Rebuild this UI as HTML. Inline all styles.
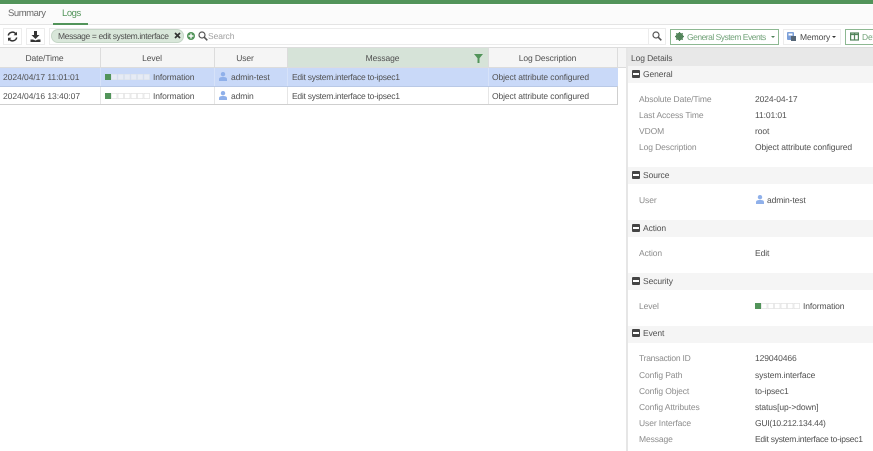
<!DOCTYPE html>
<html><head><meta charset="utf-8">
<style>
html,body{margin:0;padding:0;background:#fff}
#p{position:relative;width:873px;height:451px;overflow:hidden;background:#fff;font-family:"Liberation Sans",sans-serif;font-size:8.5px;letter-spacing:-.1px;color:#505050;text-rendering:geometricPrecision}
#p div,#p svg{position:absolute}
.t{white-space:nowrap;line-height:12px;height:12px}
.c{text-align:center}
.g{color:#8c8c8c}
.e{letter-spacing:-.26px}
.sec{left:628px;width:245px;height:17px;background:#f5f5f5}
.min{left:632px;width:8px;height:8px;background:#444;border-radius:1px}
.min:after{content:"";position:absolute;left:1px;top:3px;width:6px;height:2px;background:#fff}
.b{box-sizing:border-box;background:#fff;border:1px solid #ececec}
.v{width:1px;background:#dcdcdc}
.ro{width:1px;background:#e6e6e6}
</style></head><body><div id="p">
<div style="left:0;top:0;width:873px;height:4px;background:#52945a"></div>
<div style="left:0;top:5px;width:873px;height:19px;background:#fbfbfb"></div>
<div style="left:0;top:24px;width:873px;height:1px;background:#e4e4e4"></div>
<div style="left:53px;top:23px;width:35px;height:2px;background:#52945a"></div>
<div class="t" style="left:8px;top:8px;font-size:9.5px;letter-spacing:-.45px;color:#6a6a6a">Summary</div>
<div class="t" style="left:62px;top:8px;font-size:9.5px;letter-spacing:-.45px;color:#52945a">Logs</div>

<div class="b" style="left:3px;top:28px;width:19px;height:17px"></div>
<svg style="left:7px;top:31px" width="11" height="11" viewBox="0 0 11 11" fill="none" stroke="#333" stroke-width="1.500"><path d="M1.300 4.500A4.200 4.200 0 0 1 9 3.200M9.700 6.500A4.200 4.200 0 0 1 2 7.800"/><path d="M10 .8v3.400H6.600L10 .8zM1 10.200V6.800h3.400L1 10.200z" fill="#333" stroke="none"/></svg>
<div class="b" style="left:26px;top:28px;width:19px;height:17px"></div>
<svg style="left:30px;top:31px" width="11" height="11" viewBox="0 0 11 11"><path d="M4 0h3v4h2.500L5.500 8 1.500 4H4zM.5 8.500H3l2.500 1L8 8.500h2.500V11H.5z" fill="#333"/></svg>

<div class="b" style="left:49px;top:28px;width:600px;height:17px"></div>
<div style="left:51px;top:29px;width:133px;height:14px;background:#d9e7da;border:1px solid #c5d6c7;box-sizing:border-box;border-radius:7px"></div>
<div class="t" style="left:58px;top:30px;color:#4f4f4f;letter-spacing:-.37px">Message = edit system.interface</div>
<svg style="left:174px;top:32px" width="7" height="7" viewBox="0 0 7 7" stroke="#333" stroke-width="1.700"><path d="M1 1l5 5M6 1L1 6"/></svg>
<svg style="left:187px;top:32px" width="8" height="8" viewBox="0 0 8 8"><circle cx="4" cy="4" r="4" fill="#52945a"/><path d="M4 1.500v5M1.500 4h5" stroke="#fff" stroke-width="1.400"/></svg>
<svg style="left:198px;top:31px" width="10" height="10" viewBox="0 0 10 10" fill="none" stroke="#555" stroke-width="1.200"><circle cx="4" cy="4" r="3"/><path d="M6.200 6.200L9.300 9.300" stroke-width="1.600"/></svg>
<div class="t g" style="left:208px;top:30px;color:#a0a0a0">Search</div>
<div class="b" style="left:648px;top:28px;width:18px;height:17px"></div>
<svg style="left:652px;top:31px" width="10" height="10" viewBox="0 0 10 10" fill="none" stroke="#555" stroke-width="1.200"><circle cx="4" cy="4" r="3"/><path d="M6.200 6.200L9.300 9.300" stroke-width="1.600"/></svg>

<div class="b" style="left:670px;top:29px;width:109px;height:16px;border-color:#8db892"></div>
<svg style="left:675px;top:32px" width="9" height="9" viewBox="0 0 9 9"><circle cx="4.500" cy="4.500" r="2.800" fill="none" stroke="#52845a" stroke-width="2"/><path d="M4.500 0v9M0 4.500h9M1.300 1.300l6.400 6.400M7.700 1.300L1.300 7.700" stroke="#52845a" stroke-width="1.200"/></svg>
<div class="t" style="left:687px;top:31px;color:#73a37a;letter-spacing:-.5px">General System Events</div>
<div style="left:771px;top:36px;width:0;height:0;border:2px solid transparent;border-top:2px solid #52845a"></div>
<div class="b" style="left:783px;top:29px;width:58px;height:16px"></div>
<svg style="left:787px;top:32px" width="9" height="9" viewBox="0 0 9 9"><rect x="0" y="0" width="7" height="8" rx="1" fill="#7b9fd8"/><rect x="1.500" y="1.500" width="4" height="2" fill="#fff"/><rect x="4" y="4" width="5" height="5" fill="#567"/></svg>
<div class="t" style="left:800px;top:31px;color:#484848">Memory</div>
<div style="left:832px;top:36px;width:0;height:0;border:2px solid transparent;border-top:2px solid #333"></div>
<div class="b" style="left:844.500px;top:29px;width:40px;height:16px;border-color:#8db892"></div>
<svg style="left:850px;top:32px" width="9" height="9" viewBox="0 0 9 9" fill="none" stroke="#52845a" stroke-width="1.200"><rect x=".6" y="1" width="7.800" height="7"/><path d="M4.500 1v7M.6 2.500h7.800"/></svg>
<div class="t" style="left:862px;top:31px;color:#73a37a">Details</div>

<div style="left:0;top:47px;width:873px;height:1px;background:#dcdcdc"></div>
<div style="left:0;top:48px;width:618px;height:19px;background:#f5f5f5"></div>
<div style="left:288px;top:48px;width:200px;height:19px;background:#d6e3d8"></div>
<div style="left:0;top:67px;width:618px;height:1px;background:#dcdcdc"></div>
<div class="v" style="left:100px;top:48px;height:19px"></div>
<div class="v" style="left:214px;top:48px;height:19px"></div>
<div class="v" style="left:287px;top:48px;height:19px"></div>
<div class="v" style="left:488px;top:48px;height:19px"></div>
<div class="v" style="left:617px;top:48px;height:19px"></div>
<div class="t c" style="left:0;top:52px;width:89px">Date/Time</div>
<div class="t c" style="left:100px;top:52px;width:104px">Level</div>
<div class="t c" style="left:214px;top:52px;width:62px">User</div>
<div class="t c" style="left:288px;top:52px;width:189px">Message</div>
<div class="t c" style="left:489px;top:52px;width:117px">Log Description</div>
<svg style="left:474px;top:54px" width="9" height="9" viewBox="0 0 9 9"><path d="M0 0h9L5.500 4.200V9h-2V4.200z" fill="#52945a"/></svg>

<div style="left:618px;top:48px;width:8px;height:19px;background:#f5f5f5"></div>
<div style="left:618px;top:67px;width:8px;height:1px;background:#dcdcdc"></div>

<div style="left:0;top:68px;width:618px;height:18px;background:#c9d9f8"></div>
<div style="left:0;top:86px;width:618px;height:1px;background:#b9c9e6"></div>
<div style="left:0;top:87px;width:618px;height:17px;background:#fff"></div>
<div style="left:0;top:104px;width:618px;height:1px;background:#cfcfcf"></div>
<div style="left:617px;top:86px;width:1px;height:19px;background:#cfcfcf"></div>
<div class="ro" style="left:100px;top:68px;height:18px;background:#d6e2f9"></div>
<div class="ro" style="left:214px;top:68px;height:18px;background:#d6e2f9"></div>
<div class="ro" style="left:287px;top:68px;height:18px;background:#d6e2f9"></div>
<div class="ro" style="left:488px;top:68px;height:18px;background:#d6e2f9"></div>
<div class="ro" style="left:100px;top:87px;height:17px"></div>
<div class="ro" style="left:214px;top:87px;height:17px"></div>
<div class="ro" style="left:287px;top:87px;height:17px"></div>
<div class="ro" style="left:488px;top:87px;height:17px"></div>

<div class="t" style="left:3px;top:71px;letter-spacing:-.05px">2024/04/17 11:01:01</div>
<div class="t" style="left:3px;top:90px;letter-spacing:-.05px">2024/04/16 13:40:07</div>

<svg style="left:105px;top:74px" width="45" height="6" viewBox="0 0 45 6"><rect width="6" height="6" fill="#52945a"/><g fill="#e6ebf5" stroke="#dde2ea" stroke-width=".6"><rect x="6.500" y=".3" width="5.500" height="5.400"/><rect x="13" y=".3" width="5.500" height="5.400"/><rect x="19.500" y=".3" width="5.500" height="5.400"/><rect x="26" y=".3" width="5.500" height="5.400"/><rect x="32.500" y=".3" width="5.500" height="5.400"/><rect x="39" y=".3" width="5.500" height="5.400"/></g></svg>
<svg style="left:105px;top:93px" width="45" height="6" viewBox="0 0 45 6"><rect width="6" height="6" fill="#52945a"/><g fill="#fff" stroke="#dcdcdc" stroke-width=".6"><rect x="6.500" y=".3" width="5.500" height="5.400"/><rect x="13" y=".3" width="5.500" height="5.400"/><rect x="19.500" y=".3" width="5.500" height="5.400"/><rect x="26" y=".3" width="5.500" height="5.400"/><rect x="32.500" y=".3" width="5.500" height="5.400"/><rect x="39" y=".3" width="5.500" height="5.400"/></g></svg>
<div class="t" style="left:153px;top:71px">Information</div>
<div class="t" style="left:153px;top:90px">Information</div>

<svg style="left:219px;top:72px" width="8" height="9" viewBox="0 0 8 9" fill="#8fb0ea"><circle cx="4" cy="2.200" r="2.200"/><path d="M0 9V7.200C0 5.500 1.500 5 4 5s4 .5 4 2.200V9z"/></svg>
<svg style="left:219px;top:91px" width="8" height="9" viewBox="0 0 8 9" fill="#8fb0ea"><circle cx="4" cy="2.200" r="2.200"/><path d="M0 9V7.200C0 5.500 1.500 5 4 5s4 .5 4 2.200V9z"/></svg>
<div class="t" style="left:231px;top:71px">admin-test</div>
<div class="t" style="left:231px;top:90px">admin</div>
<div class="t e" style="left:292px;top:71px">Edit system.interface to-ipsec1</div>
<div class="t e" style="left:292px;top:90px">Edit system.interface to-ipsec1</div>
<div class="t" style="left:492px;top:71px">Object attribute configured</div>
<div class="t" style="left:492px;top:90px">Object attribute configured</div>

<div style="left:626px;top:48px;width:2px;height:403px;background:#e6e6e6"></div>
<div style="left:628px;top:48px;width:245px;height:18px;background:#e8e8e8"></div>
<div class="t" style="left:631px;top:52px">Log Details</div>

<div class="sec" style="top:66px"></div><div class="min" style="top:70px"></div><div class="t" style="left:643px;top:68px">General</div>
<div class="sec" style="top:167px"></div><div class="min" style="top:171px"></div><div class="t" style="left:643px;top:169px">Source</div>
<div class="sec" style="top:220px"></div><div class="min" style="top:224px"></div><div class="t" style="left:643px;top:222px">Action</div>
<div class="sec" style="top:273px"></div><div class="min" style="top:277px"></div><div class="t" style="left:643px;top:275px">Security</div>
<div class="sec" style="top:326px"></div><div class="min" style="top:329px"></div><div class="t" style="left:643px;top:327px">Event</div>

<div class="t g" style="left:639px;top:93px">Absolute Date/Time</div><div class="t" style="left:755px;top:93px">2024-04-17</div>
<div class="t g" style="left:639px;top:109px">Last Access Time</div><div class="t" style="left:755px;top:109px">11:01:01</div>
<div class="t g" style="left:639px;top:125px">VDOM</div><div class="t" style="left:755px;top:125px">root</div>
<div class="t g" style="left:639px;top:141px">Log Description</div><div class="t" style="left:755px;top:141px">Object attribute configured</div>
<div class="t g" style="left:639px;top:194px">User</div>
<svg style="left:756px;top:195px" width="8" height="9" viewBox="0 0 8 9" fill="#8fb0ea"><circle cx="4" cy="2.200" r="2.200"/><path d="M0 9V7.200C0 5.500 1.500 5 4 5s4 .5 4 2.200V9z"/></svg>
<div class="t" style="left:767px;top:194px">admin-test</div>
<div class="t g" style="left:639px;top:247px">Action</div><div class="t" style="left:755px;top:247px">Edit</div>
<div class="t g" style="left:639px;top:300px">Level</div>
<svg style="left:755px;top:303px" width="45" height="6" viewBox="0 0 45 6"><rect width="6" height="6" fill="#52945a"/><g fill="#fff" stroke="#dcdcdc" stroke-width=".6"><rect x="6.500" y=".3" width="5.500" height="5.400"/><rect x="13" y=".3" width="5.500" height="5.400"/><rect x="19.500" y=".3" width="5.500" height="5.400"/><rect x="26" y=".3" width="5.500" height="5.400"/><rect x="32.500" y=".3" width="5.500" height="5.400"/><rect x="39" y=".3" width="5.500" height="5.400"/></g></svg>
<div class="t" style="left:803px;top:300px">Information</div>
<div class="t g" style="left:639px;top:352px;letter-spacing:-.25px">Transaction ID</div><div class="t" style="left:755px;top:352px">129040466</div>
<div class="t g" style="left:639px;top:369px">Config Path</div><div class="t" style="left:755px;top:369px">system.interface</div>
<div class="t g" style="left:639px;top:385px">Config Object</div><div class="t" style="left:755px;top:385px">to-ipsec1</div>
<div class="t g" style="left:639px;top:401px">Config Attributes</div><div class="t" style="left:755px;top:401px">status[up-&gt;down]</div>
<div class="t g" style="left:639px;top:417px">User Interface</div><div class="t" style="left:755px;top:417px;letter-spacing:-.25px">GUI(10.212.134.44)</div>
<div class="t g" style="left:639px;top:433px">Message</div><div class="t e" style="left:755px;top:433px">Edit system.interface to-ipsec1</div>
</div></body></html>
